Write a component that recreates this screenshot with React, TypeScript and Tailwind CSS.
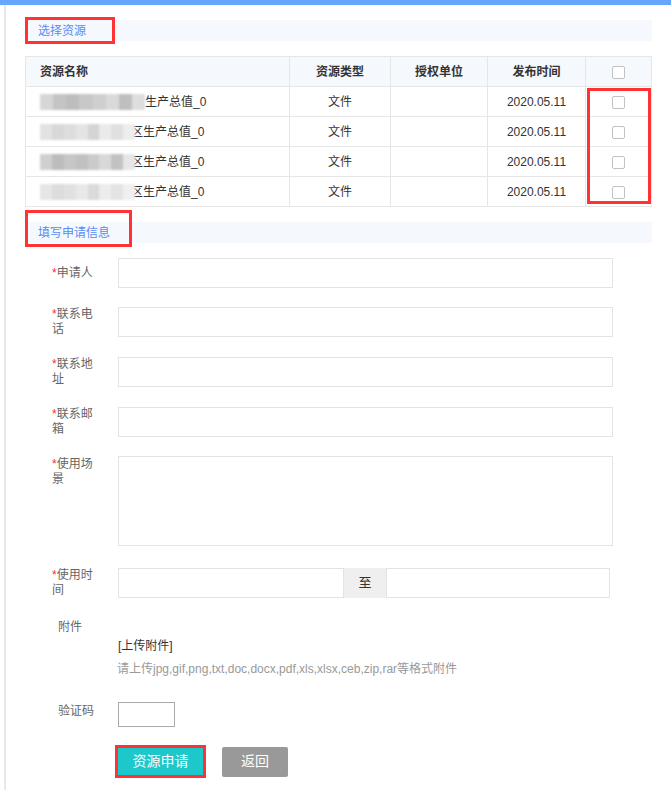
import { useState } from 'react';

const rows = [
  { tail: '生产总值_0', mosaic: 105, tones: ['#d6d6d6', '#c4c4c4', '#bdbdbd', '#c8c8c8', '#cfcfcf', '#d9d9d9', '#bfbfbf', '#dedede'] },
  { tail: '区生产总值_0', mosaic: 95, tones: ['#e2e2e2', '#d8d8d8', '#dddddd', '#e4e4e4', '#d4d4d4', '#eaeaea', '#e0e0e0', '#ededed'] },
  { tail: '区生产总值_0', mosaic: 95, tones: ['#cfcfcf', '#bcbcbc', '#c6c6c6', '#c0c0c0', '#cbcbcb', '#d8d8d8', '#c2c2c2', '#e6e6e6'] },
  { tail: '区生产总值_0', mosaic: 95, tones: ['#e6e6e6', '#dcdcdc', '#e1e1e1', '#e8e8e8', '#dadada', '#ececec', '#e3e3e3', '#efefef'] },
];

function Check() {
  return <span className="inline-block w-[13px] h-[13px] border border-[#c2c2c2] rounded-[2px] bg-white align-middle" />;
}

function Label({ text, required = true }: { text: string; required?: boolean }) {
  return (
    <div className="w-[93px] shrink-0 pl-[27px]">
      <div className="w-[44px] text-[12px] leading-[15px] text-[#666]">
        {required && <span className="text-[#ff2a2a]">*</span>}
        {text}
      </div>
    </div>
  );
}

export default function App() {
  const [checked] = useState(false);

  return (
    <div className="min-h-[791px] bg-white text-[#333]" style={{ fontFamily: '"Liberation Sans", "Noto Sans CJK SC", sans-serif' }}>
      {/* top bar */}
      <div className="h-[5px] bg-[#66a6ff]" />

      <div className="pl-[4px]">
        <div className="border-l-2 border-[#e8e8e8] pl-[19px] pr-[19px] pt-[15px] pb-[12px]">
          {/* 选择资源 */}
          <div className="relative h-[21px] bg-[#f5f8fd] flex items-center pl-[13px] text-[12px] text-[#5a8cf2]">
            选择资源
            <span className="absolute left-0 -top-[3px] w-[90px] h-[27px] border-[3px] border-[#ff3333]" />
          </div>

          {/* table */}
          <div className="relative mt-[15px]">
            <table className="w-[627px] border-collapse text-[12px] text-[#333]">
              <thead>
                <tr className="h-[30px] bg-[#f5f8fc]">
                  <th className="w-[264px] border border-[#e6e6e6] text-left pl-[14px] font-bold">资源名称</th>
                  <th className="w-[101px] border border-[#e6e6e6] font-bold">资源类型</th>
                  <th className="w-[97px] border border-[#e6e6e6] font-bold">授权单位</th>
                  <th className="w-[98px] border border-[#e6e6e6] font-bold">发布时间</th>
                  <th className="border border-[#e6e6e6]"><Check /></th>
                </tr>
              </thead>
              <tbody>
                {rows.map((r, i) => (
                  <tr key={i} className="h-[30px]">
                    <td className="border border-[#e6e6e6] pl-[14px]">
                      <div className="flex items-center">
                        <span className="flex h-[16px] blur-[1px] overflow-hidden" style={{ width: r.mosaic }}>
                          {r.tones.map((t, j) => (
                            <span key={j} className="flex-1 h-full" style={{ background: t }} />
                          ))}
                        </span>
                        <span className={i === 0 ? '' : '-ml-[4px]'}>{r.tail}</span>
                      </div>
                    </td>
                    <td className="border border-[#e6e6e6] text-center">文件</td>
                    <td className="border border-[#e6e6e6]" />
                    <td className="border border-[#e6e6e6] text-center">2020.05.11</td>
                    <td className="border border-[#e6e6e6] text-center">{!checked && <Check />}</td>
                  </tr>
                ))}
              </tbody>
            </table>
            <span className="absolute left-[562px] top-[32px] w-[64px] h-[116px] border-[3px] border-[#ff3333]" />
          </div>

          {/* 填写申请信息 */}
          <div className="relative mt-[15px] h-[21px] bg-[#f5f8fd] flex items-center pl-[13px] text-[12px] text-[#5a8cf2]">
            填写申请信息
            <span className="absolute left-0 -top-[12px] w-[107px] h-[37px] border-[3px] border-[#ff3333]" />
          </div>

          {/* form */}
          <div className="mt-[15px]">
            <div className="flex items-center">
              <Label text="申请人" />
              <input className="w-[495px] h-[30px] border border-[#e3e3e3] outline-none" />
            </div>
            <div className="flex items-center mt-[19px]">
              <Label text="联系电话" />
              <input className="w-[495px] h-[30px] border border-[#e3e3e3] outline-none" />
            </div>
            <div className="flex items-center mt-[20px]">
              <Label text="联系地址" />
              <input className="w-[495px] h-[30px] border border-[#e3e3e3] outline-none" />
            </div>
            <div className="flex items-center mt-[20px]">
              <Label text="联系邮箱" />
              <input className="w-[495px] h-[30px] border border-[#e3e3e3] outline-none" />
            </div>
            <div className="flex items-start mt-[19px]">
              <div className="pt-[1px]">
                <Label text="使用场景" />
              </div>
              <textarea className="w-[495px] h-[90px] border border-[#e3e3e3] outline-none resize-none" />
            </div>
            <div className="flex items-center mt-[22px]">
              <Label text="使用时间" />
              <div className="flex h-[30px]">
                <input className="w-[226px] h-full border border-[#e3e3e3] outline-none" />
                <span className="w-[42px] h-full bg-[#efefef] flex items-center justify-center text-[13px] text-[#333]">至</span>
                <input className="w-[224px] h-full border border-[#e3e3e3] outline-none" />
              </div>
            </div>

            {/* 附件 */}
            <div className="mt-[21px] pl-[33px] text-[12px] leading-4 text-[#666]">附件</div>
            <div className="mt-[3px] pl-[93px] text-[12px] leading-4 text-[#333]">[上传附件]</div>
            <div className="mt-[7px] pl-[92px] text-[12px] leading-4 text-[#999]">
              请上传jpg,gif,png,txt,doc,docx,pdf,xls,xlsx,ceb,zip,rar等格式附件
            </div>

            {/* 验证码 */}
            <div className="flex items-center mt-[25px]">
              <div className="w-[93px] shrink-0 pl-[33px] text-[12px] text-[#666] -mt-[8px]">验证码</div>
              <input className="w-[57px] h-[25px] border border-[#aaaaaa] outline-none" />
            </div>

            {/* buttons */}
            <div className="flex items-center mt-[18px] pl-[90px]">
              <span className="border-[3px] border-[#ff3333]">
                <button className="w-[85px] h-[27px] bg-[#1cc8ca] text-white text-[14px] block">资源申请</button>
              </span>
              <button className="ml-[16px] w-[66px] h-[30px] rounded-[2px] bg-[#999] text-white text-[14px]">返回</button>
            </div>
          </div>
        </div>
      </div>
    </div>
  );
}
